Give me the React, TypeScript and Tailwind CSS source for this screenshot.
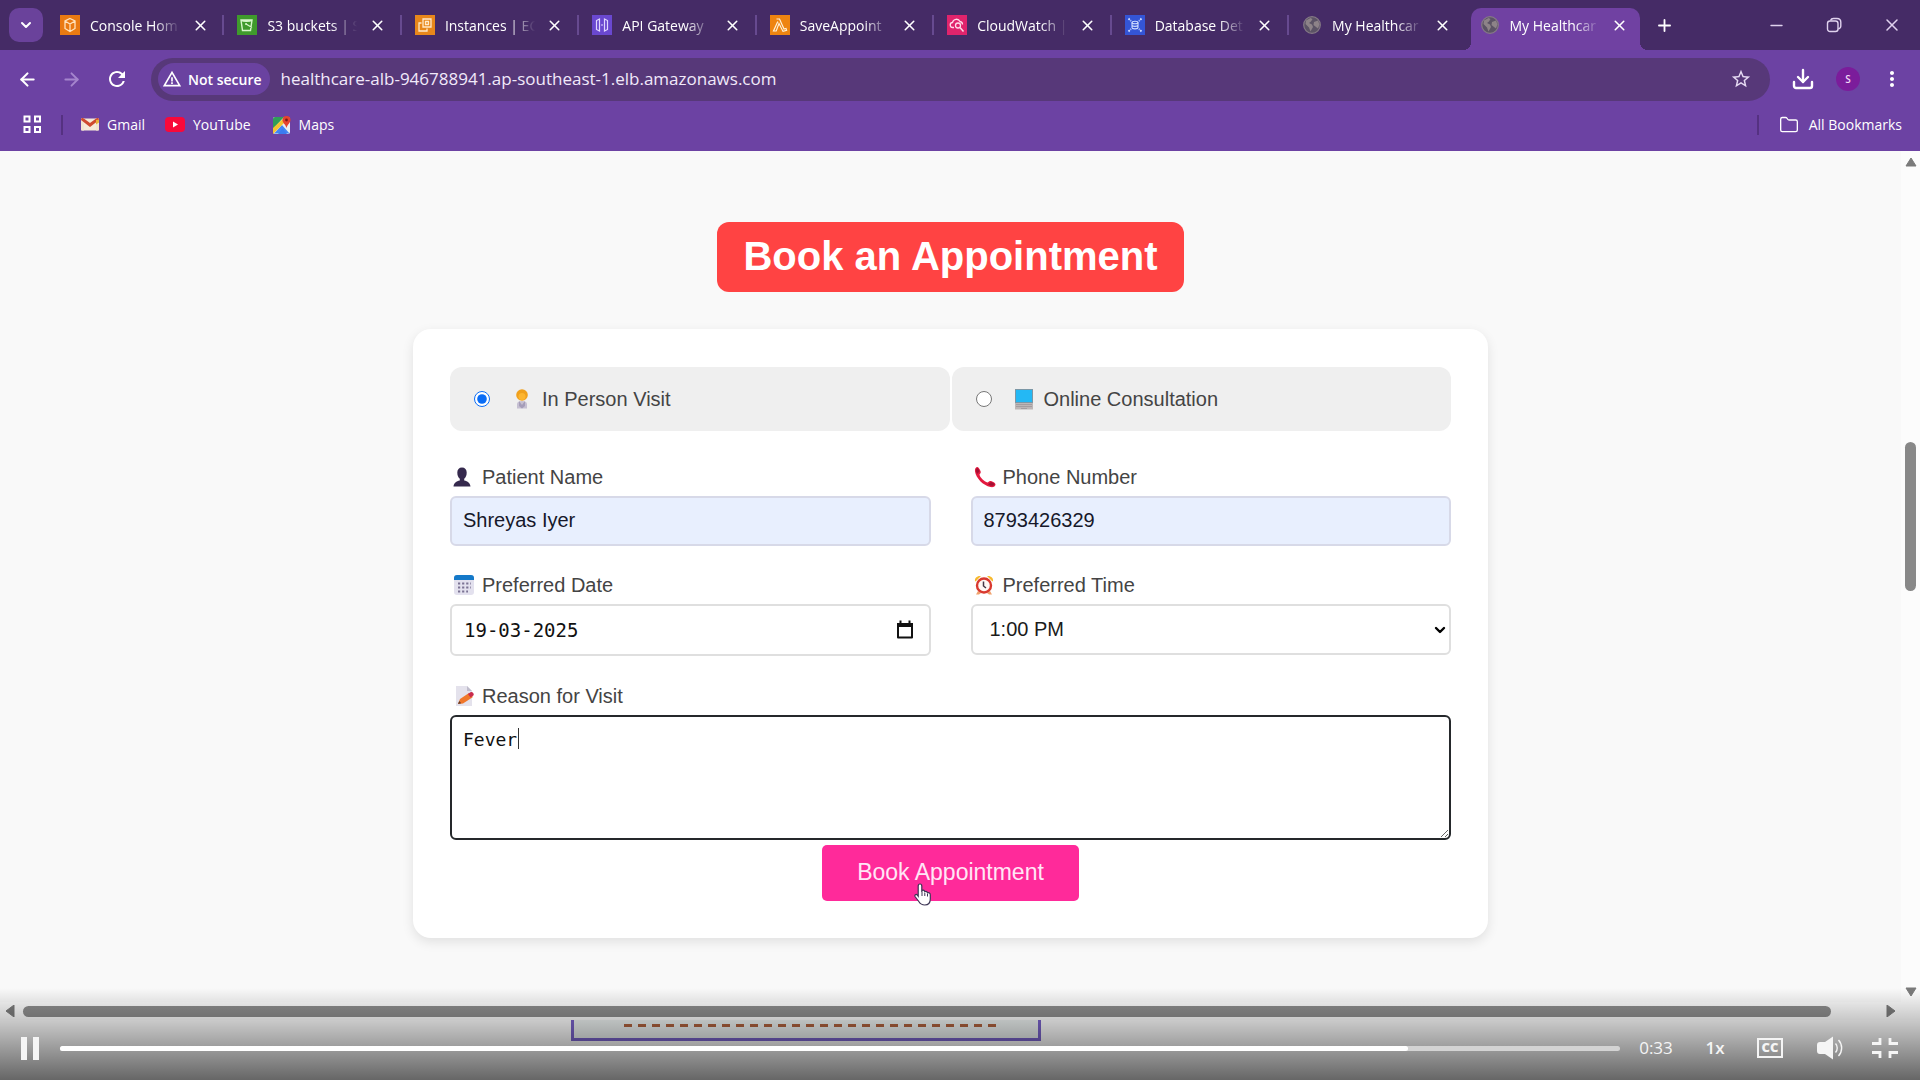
import React, { useState } from "react";
import { ArrowLeft, ArrowRight, ChevronDown, Download, Folder, Minus, Plus, X } from "lucide-react";
import { MdMoreVert, MdRefresh, MdStarBorder, MdWarningAmber } from "react-icons/md";

/* ---------- favicons ---------- */

function ConsoleIcon() {
  return (
    <svg viewBox="0 0 20 20" className="size-5 shrink-0" aria-hidden="true">
      <rect width="20" height="20" fill="#ea7a12" />
      <path d="M10 3.5 15 6v7.5L10 16.500l-5-3V6ZM5 6l5 3 5-3M10 9v7.500" fill="none" stroke="#ffe3bd" strokeWidth="1.300" />
    </svg>
  );
}

function BucketIcon() {
  return (
    <svg viewBox="0 0 20 20" className="size-5 shrink-0" aria-hidden="true">
      <rect width="20" height="20" fill="#3f9a2c" />
      <path d="M4 5h11l-1.500 10.500h-8ZM4 5c2 1.800 9 1.800 11 0M9 9l6 3.500" fill="none" stroke="#d5f5c9" strokeWidth="1.400" />
      <circle cx="9" cy="9" r="1" fill="#d5f5c9" />
    </svg>
  );
}

function InstancesIcon() {
  return (
    <svg viewBox="0 0 20 20" className="size-5 shrink-0" aria-hidden="true">
      <rect width="20" height="20" fill="#e8871b" />
      <path d="M8 4h8v8H8ZM6.500 8H4v8h8v-2.500M10.500 6.500h3v3h-3Z" fill="none" stroke="#ffe9c9" strokeWidth="1.300" />
    </svg>
  );
}

function GatewayIcon() {
  return (
    <svg viewBox="0 0 20 20" className="size-5 shrink-0" aria-hidden="true">
      <rect width="20" height="20" fill="#6a48d0" />
      <path d="M7.500 4 4.500 5.500v9L7.500 16ZM12.500 4 15.500 5.500v9L12.500 16ZM9 10h2" fill="none" stroke="#e0d6ff" strokeWidth="1.200" />
    </svg>
  );
}

function LambdaIcon() {
  return (
    <svg viewBox="0 0 20 20" className="size-5 shrink-0" aria-hidden="true">
      <rect width="20" height="20" fill="#ee8410" />
      <path d="M6.500 4h3l4.500 10 2-.6.6 2-3.600 1L9 8.500 6.200 16H3.500L7.800 6.500" fill="none" stroke="#fff0d6" strokeWidth="1.200" />
    </svg>
  );
}

function CloudWatchIcon() {
  return (
    <svg viewBox="0 0 20 20" className="size-5 shrink-0" aria-hidden="true">
      <rect width="20" height="20" fill="#e0246c" />
      <path d="M7 12.500H6a2.500 2.500 0 0 1-.5-5 4 4 0 0 1 7.500-1 3 3 0 0 1 2.500 3" fill="none" stroke="#ffdbe9" strokeWidth="1.300" />
      <circle cx="11" cy="10.500" r="2.500" fill="none" stroke="#ffdbe9" strokeWidth="1.300" />
      <path d="m13 12.500 3.500 4" stroke="#ffdbe9" strokeWidth="1.500" />
    </svg>
  );
}

function DatabaseIcon() {
  return (
    <svg viewBox="0 0 20 20" className="size-5 shrink-0" aria-hidden="true">
      <rect width="20" height="20" fill="#3455d6" />
      <path d="M3.500 3.500l2.500 2.500M16.500 3.500l-2.500 2.500M16.500 16.500l-2.500-2.500M3.500 16.500l2.500-2.500" fill="none" stroke="#cfdcff" strokeWidth="1.800" strokeDasharray="1.800 1" />
      <ellipse cx="10" cy="7.500" rx="3" ry="1.300" fill="none" stroke="#cfdcff" strokeWidth="1.100" />
      <path d="M7 7.500v5c0 1.800 6 1.800 6 0v-5M7 10c0 1.800 6 1.800 6 0" fill="none" stroke="#cfdcff" strokeWidth="1.100" />
    </svg>
  );
}

function GlobeIcon() {
  return (
    <svg viewBox="0 0 20 20" className="size-5 shrink-0" aria-hidden="true">
      <circle cx="10" cy="10" r="8.300" fill="#5b5365" stroke="#857a85" strokeWidth="1.200" />
      <path d="M4 5.500 8.500 3l2 1-1.500 2.500L7 8l3 1.500 1 2.500-2.500 4.500-1.500-4L3.500 9ZM12 7l4-1.500 1.500 4-1.500 4-2-1.500-2.500-2Z" fill="#8d8388" />
    </svg>
  );
}

/* ---------- browser chrome ---------- */

const tabs: { title: string; Icon: () => React.JSX.Element }[] = [
  { title: "Console Hom", Icon: ConsoleIcon },
  { title: "S3 buckets | S", Icon: BucketIcon },
  { title: "Instances | EC", Icon: InstancesIcon },
  { title: "API Gateway", Icon: GatewayIcon },
  { title: "SaveAppoint", Icon: LambdaIcon },
  { title: "CloudWatch |", Icon: CloudWatchIcon },
  { title: "Database Det", Icon: DatabaseIcon },
  { title: "My Healthcar", Icon: GlobeIcon },
  { title: "My Healthcar", Icon: GlobeIcon },
];

function Tab({ title, Icon, active, divider }: { title: string; Icon: () => React.JSX.Element; active: boolean; divider: boolean }) {
  return (
    <div className="relative flex min-w-0 flex-1 items-center pl-[13px]">
      {active && (
        <div className="absolute inset-x-1 top-2 bottom-0 rounded-t-[10px] bg-[#7041a2]">
          <span className="absolute bottom-0 -left-2 size-2 bg-[radial-gradient(circle_at_0_0,transparent_8px,#7041a2_8px)]" />
          <span className="absolute -right-2 bottom-0 size-2 bg-[radial-gradient(circle_at_100%_0,transparent_8px,#7041a2_8px)]" />
        </div>
      )}
      <div className="relative flex min-w-0 flex-1 items-center">
        <Icon />
        <a
          href="#"
          className="ml-[10px] w-[94px] overflow-hidden text-[14px] whitespace-nowrap [mask-image:linear-gradient(to_right,black_68%,transparent_96%)]"
        >
          {title}
        </a>
        <button type="button" aria-label={"Close " + title} className="ml-[6px] flex size-5 items-center justify-center">
          <X className="size-[17px]" strokeWidth={2.2} />
        </button>
      </div>
      {divider && <span className="absolute right-0 h-5 w-[2px] bg-[#674a90]" />}
    </div>
  );
}

function TabStrip() {
  return (
    <div className="flex h-[50px] bg-[#452b66] text-white">
      <div className="flex w-[47px] shrink-0 items-center pl-[9px]">
        <button type="button" aria-label="Search tabs" className="flex size-[34px] items-center justify-center rounded-[10px] bg-[#6a429b]">
          <ChevronDown className="size-4" strokeWidth={3} />
        </button>
      </div>
      <div className="flex max-w-[1597px] min-w-0 flex-1">
        {tabs.map((t, i) => (
          <Tab key={i} title={t.title} Icon={t.Icon} active={i === 8} divider={i < 7} />
        ))}
      </div>
      <button type="button" aria-label="New tab" className="flex w-10 items-center justify-center">
        <Plus className="size-[19px]" strokeWidth={2.3} />
      </button>
      <div className="ml-auto flex items-center pr-[18px] text-[#e0d2ee]">
        <button type="button" aria-label="Minimize" className="flex w-[57px] justify-center">
          <Minus className="size-[19px]" strokeWidth={1.6} />
        </button>
        <button type="button" aria-label="Restore" className="flex w-[57px] justify-center">
          <svg viewBox="0 0 16 16" className="size-4" fill="none" stroke="currentColor" strokeWidth="1.400" aria-hidden="true">
            <rect x="1.500" y="4" width="10.500" height="10.500" rx="2.500" />
            <path d="M4.500 3.500C5 2 6 1.500 7.500 1.500H11c2.500 0 3.800 1.300 3.800 3.800V9c0 1.300-.8 2.500-2.500 3" />
          </svg>
        </button>
        <button type="button" aria-label="Close window" className="ml-5 flex w-5 justify-center">
          <X className="size-5" strokeWidth={1.8} />
        </button>
      </div>
    </div>
  );
}

function Toolbar() {
  return (
    <div className="flex h-[58px] items-center bg-[#6c42a3] pr-4 pl-4 text-white">
      <button type="button" aria-label="Back" className="flex w-[22px] justify-center">
        <ArrowLeft className="size-[21px]" strokeWidth={2.4} />
      </button>
      <button type="button" aria-label="Forward" className="ml-[22px] flex w-[22px] justify-center text-[#a585cd]">
        <ArrowRight className="size-[21px]" strokeWidth={2.2} />
      </button>
      <button type="button" aria-label="Reload" className="ml-[23px] flex w-6 justify-center">
        <MdRefresh className="size-6" />
      </button>
      <div className="ml-[22px] flex h-[43px] min-w-0 flex-1 items-center rounded-full bg-[#573879] pr-[18px] pl-[7px]">
        <button type="button" className="flex h-[32px] items-center gap-[6px] rounded-full bg-[#6a42a0] pr-[8px] pl-1 text-[14px] font-semibold">
          <MdWarningAmber className="size-5" />
          Not secure
        </button>
        <input
          aria-label="Address"
          readOnly
          value="healthcare-alb-946788941.ap-southeast-1.elb.amazonaws.com"
          className="ml-[11px] min-w-0 flex-1 bg-transparent text-[17px] text-[#f1e9fa] outline-none"
        />
        <button type="button" aria-label="Bookmark this page">
          <MdStarBorder className="size-[22px] text-[#e6daf3]" />
        </button>
      </div>
      <button type="button" aria-label="Downloads" className="ml-[21px]">
        <Download className="size-[24px]" strokeWidth={2.4} />
      </button>
      <button type="button" aria-label="Profile" className="ml-[21px] flex size-6 items-center justify-center rounded-full bg-[#7b1c9b] text-[10px] font-semibold text-[#f2d9f6]">
        S
      </button>
      <button type="button" aria-label="Menu" className="ml-5">
        <MdMoreVert className="size-6" />
      </button>
    </div>
  );
}

function GmailIcon() {
  return (
    <svg viewBox="0 0 18 14" className="h-[15px] w-[18px]" aria-hidden="true">
      <path d="M1 1h16v12H1Z" fill="#f5ead9" />
      <path d="M0 2v11h3V5l6 4.500L15 5v8h3V2c0-1.500-1.500-2-2.500-1.200L9 5.500 2.500.8C1.500 0 0 .5 0 2Z" fill="#f3e4cf" />
      <path d="M0 2.500C0 .5 1.500.2 2.500.8L9 5.500 15.500.8c1-.6 2.500-.3 2.500 1.700L9 9.500Z" fill="#cf4a2f" />
      <path d="M15 2.500 18 2v3l-3 2Z" fill="#e8b23a" />
    </svg>
  );
}

function YouTubeIcon() {
  return (
    <svg viewBox="0 0 20 15" className="h-[15px] w-5" aria-hidden="true">
      <rect width="20" height="15" rx="4" fill="#f8093a" />
      <path d="m8 4.500 5 3-5 3Z" fill="#fff" />
    </svg>
  );
}

function MapsIcon() {
  return (
    <svg viewBox="0 0 18 18" className="size-[18px]" aria-hidden="true">
      <rect y="1" width="17" height="17" rx="2" fill="#e9eef0" />
      <path d="M0 3c0-1 1-2 2-2h9L0 13Z" fill="#2f9e58" />
      <path d="M1 17.500 9 9l7.500 8.500Z" fill="#4285f4" />
      <path d="M0 12 12 1l2 3L0 18Z" fill="#f4c430" />
      <path d="m5 18 4.500-5.500L14 18Z" fill="#3b7cf0" />
      <path d="M13.500 0A4 4 0 0 1 17.500 4c0 3-3 4-4 8-1-4-4-5-4-8a4 4 0 0 1 4-4Z" fill="#e5432f" />
      <circle cx="13.500" cy="4" r="1.400" fill="#7d1a14" />
    </svg>
  );
}

function BookmarksBar() {
  return (
    <div className="flex h-[43px] items-center bg-[#6c42a3] pr-[18px] pb-[10px] pl-[23px] text-[14px] text-white">
      <button type="button" aria-label="Apps">
        <svg viewBox="0 0 19 19" className="size-[19px]" fill="none" stroke="currentColor" strokeWidth="2" aria-hidden="true">
          <path d="M1.500 1.500h5v5h-5ZM12 1.500h5v5h-5ZM1.500 12h5v5h-5ZM12 12h5v5h-5Z" />
        </svg>
      </button>
      <span className="ml-[19px] h-5 w-[2px] bg-[#553181]" />
      <a href="#" className="ml-[18px] flex items-center gap-2">
        <GmailIcon />
        Gmail
      </a>
      <a href="#" className="ml-5 flex items-center gap-2">
        <YouTubeIcon />
        YouTube
      </a>
      <a href="#" className="ml-[22px] flex items-center gap-2">
        <MapsIcon />
        Maps
      </a>
      <span className="ml-auto h-5 w-[2px] bg-[#553181]" />
      <a href="#" className="ml-5 flex items-center gap-[10px]">
        <Folder className="size-5" strokeWidth={1.6} />
        All Bookmarks
      </a>
    </div>
  );
}

/* ---------- form icons ---------- */

function PersonStanding() {
  return (
    <svg viewBox="0 0 14 22" className="h-[22px] w-[14px]" aria-hidden="true">
      <path d="M2 20.500v-4.500c0-2 2-3 5-3s5 1 5 3v4.500Z" fill="#c6c0d2" />
      <path d="m4 13 3 4 3-4v5l-3 2.500-3-2.500Z" fill="#a59db9" />
      <circle cx="7" cy="7" r="5.800" fill="#f0a01c" />
      <ellipse cx="7" cy="8.500" rx="3.500" ry="3.500" fill="#fdb52f" />
    </svg>
  );
}

function Laptop() {
  return (
    <svg viewBox="0 0 20 22" className="h-[22px] w-5" aria-hidden="true">
      <rect x="1" y="1" width="18" height="14" fill="#7b97a6" />
      <rect x="2" y="2" width="16" height="12" fill="#24b8f4" />
      <path d="M1 15h18v6.500H1Z" fill="#bdb6b6" />
      <path d="M2 16.500h16M2 18.500h16M7 20.500h6" stroke="#a39da0" />
    </svg>
  );
}

function Bust() {
  return (
    <svg viewBox="0 0 18 20" className="h-5 w-[18px]" aria-hidden="true">
      <path d="M9 .5c3 0 4.700 2 4.700 5 0 3.200-1 5-2.500 6.300v1.700c3.500.8 6 2.500 6.300 6H.5c.3-3.500 2.800-5.200 6.300-6v-1.700C5.300 10.500 4.300 8.700 4.300 5.500c0-3 1.700-5 4.700-5Z" fill="#35294d" />
    </svg>
  );
}

function Receiver() {
  return (
    <svg viewBox="0 0 22 22" className="size-[22px]" aria-hidden="true">
      <path d="M2.500 1.200C4 .5 5.500 2.500 6.500 5c.8 2-.5 2.500-1 3.500.5 3 4.500 7 8 8 1-.5 1.500-2 3.500-1.500 2.500.7 4.500 2 4.500 3.500 0 2-2.500 3-5 2.500C9 19.500 2 12 1 5.500.8 3.500 1.200 1.800 2.500 1.200Z" fill="#e31a3f" />
      <path d="M3 2c1 0 2 1.500 2.500 3.500L3 8C1.800 5.500 1.500 3 3 2ZM14 18.500l3-2.500c2 .5 3.500 1.500 3.500 2.500-.5 1.500-3.500 2-6.500 0Z" fill="#a50f33" />
    </svg>
  );
}

function Calendar() {
  return (
    <svg viewBox="0 0 22 22" className="size-[22px]" aria-hidden="true">
      <rect x="1" y="1" width="20" height="20" rx="3" fill="#e3e1ee" />
      <path d="M1 6V4a3 3 0 0 1 3-3h14a3 3 0 0 1 3 3v2Z" fill="#1479c9" />
      <path d="M5 9.500h13M5 13.500h13M5 17.500h10" stroke="#7b7393" strokeWidth="2" strokeDasharray="2.200 1.900" />
    </svg>
  );
}

function AlarmClock() {
  return (
    <svg viewBox="0 0 20 20" className="size-5" aria-hidden="true">
      <path d="M1 6c-.5-3 2-5.500 6-5L1.500 6.500ZM19 6c.5-3-2-5.500-6-5l5.500 5.500Z" fill="#f7b92c" />
      <path d="m4 16-2 3.500h3L7 18ZM16 16l2 3.500h-3L13 18Z" fill="#f0a26e" />
      <circle cx="10" cy="10.500" r="7" fill="#fff8f4" stroke="#d9392f" strokeWidth="2.400" />
      <path d="M9.500 6.500v4.500l2.500 2" fill="none" stroke="#433746" strokeWidth="1.500" />
    </svg>
  );
}

function Memo() {
  return (
    <svg viewBox="0 0 22 22" className="size-[22px]" aria-hidden="true">
      <path d="M3 1h11l5 5v15H3Z" fill="#e4e2ec" />
      <path d="M14 1v5h5Z" fill="#bfbccb" />
      <path d="m5 19 2-5 9-6 4 4L10 18.500Z" fill="#f0772a" />
      <path d="m15 9 2.500-1.800c1-.6 2-.2 2.700.8.700 1 .8 2-.2 2.800L17.500 12.500Z" fill="#c92c4c" />
      <path d="m5 19 1.200-3 2 2.300Z" fill="#5b3b2e" />
    </svg>
  );
}

/* ---------- booking form ---------- */

function Field({ id, label, icon, className, children }: { id: string; label: string; icon: React.ReactNode; className: string; children: React.ReactNode }) {
  return (
    <div className={className}>
      <label htmlFor={id} className="flex h-[38px] items-center text-[20px] text-[#444]">
        <span className="flex w-8 shrink-0 items-center pl-[3px]">{icon}</span>
        {label}
      </label>
      {children}
    </div>
  );
}

function BookingForm() {
  const [visit, setVisit] = useState("person");
  const [reason, setReason] = useState("Fever");
  const options = [
    { id: "person", label: "In Person Visit", icon: <PersonStanding /> },
    { id: "online", label: "Online Consultation", icon: <Laptop /> },
  ];
  return (
    <form
      onSubmit={(e) => e.preventDefault()}
      className="relative w-full max-w-[1075px] rounded-[18px] bg-white px-[37px] pt-[38px] pb-[37px] shadow-[0_4px_12px_rgba(0,0,0,0.1)]"
    >
      <div className="grid grid-cols-2 gap-[2px]">
        {options.map((o) => (
          <label key={o.id} className="flex h-[64px] items-center rounded-[12px] bg-[#efefef] pl-6 text-[20px] text-[#444]">
            <input
              type="radio"
              name="visit"
              checked={visit === o.id}
              onChange={() => setVisit(o.id)}
              className="size-4 accent-[#0a6cf5]"
            />
            <span className="ml-[22px] flex w-[30px] shrink-0 justify-center pr-[10px]">{o.icon}</span>
            {o.label}
          </label>
        ))}
      </div>

      <div className="mt-[27px] grid grid-cols-2 gap-x-10">
        <Field id="name" label="Patient Name" icon={<Bust />} className="mb-5">
          <input
            id="name"
            defaultValue="Shreyas Iyer"
            className="h-[50px] w-full rounded-[6px] border-2 border-[#d7d9e8] bg-[#e8effe] px-[11px] pb-[2px] text-[20px] text-[#16182a]"
          />
        </Field>
        <Field id="phone" label="Phone Number" icon={<Receiver />} className="mb-5">
          <input
            id="phone"
            type="tel"
            defaultValue="8793426329"
            className="h-[50px] w-full rounded-[6px] border-2 border-[#d7d9e8] bg-[#e8effe] px-[11px] pb-[2px] text-[20px] text-[#16182a]"
          />
        </Field>
        <Field id="date" label="Preferred Date" icon={<Calendar />} className="mb-[21px]">
          <div className="flex h-[52px] items-center rounded-[6px] border-2 border-[#dfdfdf] bg-white pr-[15px] pl-[12px]">
            <input
              id="date"
              defaultValue="19-03-2025"
              className="min-w-0 flex-1 bg-transparent font-['DejaVu_Sans_Mono',monospace] text-[19px] text-[#111] outline-none"
            />
            <button type="button" aria-label="Open calendar">
              <svg viewBox="0 0 18 20" className="h-5 w-[18px]" aria-hidden="true">
                <path d="M2 4h14v13.500H2Z" fill="none" stroke="#111" strokeWidth="2" strokeLinejoin="round" />
                <path d="M1 3h16v4H1ZM3.500.5h2V4h-2ZM12.500.5h2V4h-2Z" fill="#111" />
              </svg>
            </button>
          </div>
        </Field>
        <Field id="time" label="Preferred Time" icon={<AlarmClock />} className="mb-[21px]">
          <div className="relative">
            <select
              id="time"
              defaultValue="1:00 PM"
              className="h-[51px] w-full appearance-none rounded-[6px] border-2 border-[#dfdfdf] bg-white px-[17px] pb-[2px] text-[20px] text-[#1b1b1b]"
            >
              <option>1:00 PM</option>
            </select>
            <ChevronDown className="pointer-events-none absolute top-[18px] right-[3px] size-4 text-black" strokeWidth={3.6} />
          </div>
        </Field>
      </div>

      <Field id="reason" label="Reason for Visit" icon={<Memo />} className="">
        <div className="relative">
          <textarea
            id="reason"
            value={reason}
            onChange={(e) => setReason(e.target.value)}
            className="block h-[125px] w-full rounded-[6px] border-2 border-[#25282b] bg-white px-[11px] py-[9px] font-['DejaVu_Sans_Mono',monospace] text-[18px] text-[#111] outline-none"
          />
          <span className="absolute top-[13px] left-[68px] h-[21px] w-px bg-[#333]" />
        </div>
      </Field>

      <div className="mt-[5px] flex justify-center">
        <button type="submit" className="relative h-[56px] rounded-[5px] bg-[#ff2a9a] px-[35px] pb-[2px] text-[23px] text-[#ffe6f6]">
          Book Appointment
          <svg viewBox="0 0 20 24" className="absolute top-[37px] left-[91px] h-6 w-5" aria-hidden="true">
            <path
              d="M7 2c1.200 0 1.800.8 1.800 2v6l.2-1.500c1.500-.8 2.600 0 2.800 1.200 1.300-.7 2.500 0 2.700 1.200 1.500-.6 2.800.2 2.800 2V17c0 3.500-2 6-5.500 6-3 0-4.500-1-6-3.500L2 14.500c-.7-1.500 1-2.700 2.200-1.500L5.200 14.300V4c0-1.200.6-2 1.800-2Z"
              fill="#fff"
              stroke="#3d3555"
              strokeWidth="1.200"
            />
            <path d="M9 10v4M11.800 11v3M14.500 12v2.500" stroke="#3d3555" />
          </svg>
        </button>
      </div>
    </form>
  );
}

/* ---------- scrollbars ---------- */

function Triangle({ points }: { points: string }) {
  return (
    <svg viewBox="0 0 12 12" className="size-3" aria-hidden="true">
      <polygon points={points} fill="#7b7b7b" stroke="#7b7b7b" strokeLinejoin="round" />
    </svg>
  );
}

function VerticalScrollbar() {
  return (
    <div className="flex w-[19px] shrink-0 flex-col items-center bg-[#fcfcfc] pt-[5px] pb-1">
      <Triangle points="6,2 11,10 1,10" />
      <div className="flex-[274]" />
      <div className="w-[11px] flex-[148] rounded-full bg-[#888]" />
      <div className="flex-[395]" />
      <Triangle points="1,2 11,2 6,10" />
    </div>
  );
}

function HorizontalScrollbar() {
  return (
    <div className="flex h-[18px] items-center bg-[#fcfcfc] pr-[23px] pl-[4px]">
      <Triangle points="10,0 10,12 2,6" />
      <div className="ml-[7px] h-[11px] flex-[1807] rounded-full bg-[#8c8c8c]" />
      <div className="flex-[54]" />
      <Triangle points="2,0 2,12 10,6" />
    </div>
  );
}

/* ---------- video player controls ---------- */

function PlayerControls() {
  return (
    <div className="absolute inset-x-0 bottom-0 flex h-[92px] items-end bg-[linear-gradient(to_bottom,transparent,rgba(0,0,0,0.6))] pr-[22px] pb-[20px] pl-[20px] text-[#f5f5f5]">
      <div className="flex h-6 w-full items-center">
        <button type="button" aria-label="Pause" className="flex w-5 shrink-0 justify-center gap-[6px]">
          <span className="h-[23px] w-[6px] bg-[#f5f5f5]" />
          <span className="h-[23px] w-[6px] bg-[#f5f5f5]" />
        </button>
        <div className="ml-5 flex h-[5px] min-w-0 flex-1 rounded-full bg-[#d3d3d3]">
          <div className="w-[86.4%] rounded-full bg-white" />
        </div>
        <span className="w-[72px] text-center text-[17px]">0:33</span>
        <button type="button" className="w-[46px] text-center text-[17px] font-semibold">1x</button>
        <button type="button" aria-label="Captions" className="ml-[19px] flex h-5 w-[26px] items-center justify-center border-2 border-[#f5f5f5] text-[13px] font-extrabold">
          CC
        </button>
        <button type="button" aria-label="Volume" className="ml-[34px]">
          <svg viewBox="0 0 26 24" className="h-6 w-[26px]" aria-hidden="true">
            <path d="M3 6h5l8-5.500v23L8 18H3a3 3 0 0 1-3-3V9a3 3 0 0 1 3-3Z" fill="#f5f5f5" />
            <path d="M18.500 7.500c2.300 2.500 2.300 6.500 0 9M21.500 4c4.200 4.500 4.200 11.500 0 16" fill="none" stroke="#f5f5f5" strokeWidth="1.400" />
          </svg>
        </button>
        <button type="button" aria-label="Exit full screen" className="ml-[29px]">
          <svg viewBox="0 0 26 22" className="h-[22px] w-[26px]" fill="none" stroke="#f5f5f5" strokeWidth="2.800" aria-hidden="true">
            <path d="M0 6.500h8V1M26 6.500h-8V1M0 15.500h8V21M26 15.500h-8V21" />
          </svg>
        </button>
      </div>
    </div>
  );
}

export default function App() {
  return (
    <div className="relative flex min-h-screen flex-col bg-white font-['Open_Sans','Noto_Sans',sans-serif]">
      <header>
        <TabStrip />
        <Toolbar />
        <BookmarksBar />
      </header>
      <div className="flex flex-1 bg-[#f9f9f9]">
        <main className="flex min-w-0 flex-1 flex-col items-center px-4 pt-[71px] pb-[63px] font-['Liberation_Sans',Arial,sans-serif]">
          <h1 className="mb-[37px] rounded-[12px] bg-[#ff4343] px-[26px] pb-[2px] text-[40px] leading-[68px] font-bold text-white">
            Book an Appointment
          </h1>
          <BookingForm />
        </main>
        <VerticalScrollbar />
      </div>
      <HorizontalScrollbar />
      <div className="flex h-[60px] justify-center bg-white pr-[309px]">
        <div className="h-[21px] w-[470px] border-x-[3px] border-b-[3px] border-[#7a63cc] bg-[#eef3f2] pt-1 pr-[38px] pl-[50px]">
          <div className="h-[3px] bg-[repeating-linear-gradient(to_right,#b0623e_0px,#b0623e_8px,transparent_8px,transparent_14px)]" />
        </div>
      </div>
      <PlayerControls />
    </div>
  );
}
